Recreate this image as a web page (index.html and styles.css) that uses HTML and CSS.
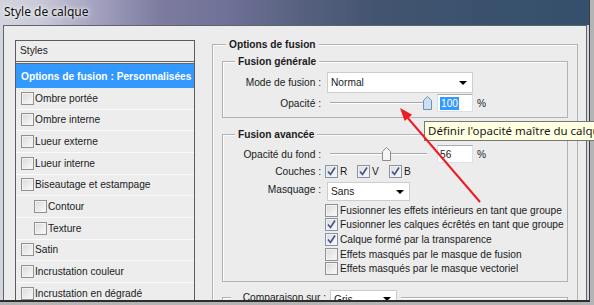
FILE: index.html
```html
<!DOCTYPE html>
<html lang="fr">

<head>
    <meta charset="UTF-8">
    <meta name="viewport" content="width=device-width, initial-scale=1.0">
    <title>Style de calque</title>
    <link rel="stylesheet" href="styles.css">
</head>

<body>

    <div class="window">
        <div class="titlebar">Style de calque</div>

        <div class="dialog">
            <!-- Liste des styles -->
            <div class="styles-list">
                <div class="list-head">Styles</div>
                <div class="list-item selected">Options de fusion : Personnalisées</div>
                <div class="list-item"><span class="cb"></span>Ombre portée</div>
                <div class="list-item"><span class="cb"></span>Ombre interne</div>
                <div class="list-item"><span class="cb"></span>Lueur externe</div>
                <div class="list-item"><span class="cb"></span>Lueur interne</div>
                <div class="list-item"><span class="cb"></span>Biseautage et estampage</div>
                <div class="list-item sub"><span class="cb"></span>Contour</div>
                <div class="list-item sub"><span class="cb"></span>Texture</div>
                <div class="list-item"><span class="cb"></span>Satin</div>
                <div class="list-item"><span class="cb"></span>Incrustation couleur</div>
                <div class="list-item"><span class="cb"></span>Incrustation en dégradé</div>
            </div>

            <!-- Options de fusion -->
            <div class="options">
                <div class="group outer">
                    <div class="group-title">Options de fusion</div>

                    <div class="group inner">
                        <div class="group-title">Fusion générale</div>
                        <div class="row mode">
                            <span class="label">Mode de fusion :</span>
                            <div class="select mode-select">Normal<i class="caret"></i></div>
                        </div>
                        <div class="row value-row">
                            <span class="label">Opacité :</span>
                            <div class="slider">
                                <div class="track"></div>
                                <svg class="thumb active" style="left: 92.5px" width="9" height="14" viewBox="0 0 9 14">
                                    <path d="M0.5 4.5 L4.5 0.5 L8.5 4.5 L8.5 13.5 L0.5 13.5 Z" />
                                </svg>
                            </div>
                            <div class="field"><span class="sel">100</span></div>
                            <span class="unit">%</span>
                        </div>
                    </div>

                    <div class="group inner advanced">
                        <div class="group-title">Fusion avancée</div>
                        <div class="row value-row">
                            <span class="label">Opacité du fond :</span>
                            <div class="slider">
                                <div class="track"></div>
                                <svg class="thumb" style="left: 51.6px" width="9" height="14" viewBox="0 0 9 14">
                                    <path d="M0.5 4.5 L4.5 0.5 L8.5 4.5 L8.5 13.5 L0.5 13.5 Z" />
                                </svg>
                            </div>
                            <div class="field">56</div>
                            <span class="unit">%</span>
                        </div>
                        <div class="row channels-row">
                            <span class="label">Couches :</span>
                            <div class="channels">
                                <span class="channel"><span class="cb checked"><svg width="11" height="11" viewBox="0 0 11 11"><path d="M2 5.5 L4.5 8.5 L9 1.5" /></svg></span>R</span>
                                <span class="channel"><span class="cb checked"><svg width="11" height="11" viewBox="0 0 11 11"><path d="M2 5.5 L4.5 8.5 L9 1.5" /></svg></span>V</span>
                                <span class="channel"><span class="cb checked"><svg width="11" height="11" viewBox="0 0 11 11"><path d="M2 5.5 L4.5 8.5 L9 1.5" /></svg></span>B</span>
                            </div>
                        </div>
                        <div class="row top-row masque">
                            <span class="label">Masquage :</span>
                            <div class="select masque-select">Sans<i class="caret"></i></div>
                        </div>
                        <div class="checklist">
                            <div class="check-row"><span class="cb"></span>Fusionner les effets intérieurs en tant que groupe</div>
                            <div class="check-row"><span class="cb checked"><svg width="11" height="11" viewBox="0 0 11 11"><path d="M2 5.5 L4.5 8.5 L9 1.5" /></svg></span>Fusionner les calques écrêtés en tant que groupe</div>
                            <div class="check-row"><span class="cb checked"><svg width="11" height="11" viewBox="0 0 11 11"><path d="M2 5.5 L4.5 8.5 L9 1.5" /></svg></span>Calque formé par la transparence</div>
                            <div class="check-row"><span class="cb"></span>Effets masqués par le masque de fusion</div>
                            <div class="check-row"><span class="cb"></span>Effets masqués par le masque vectoriel</div>
                        </div>
                    </div>

                    <div class="group inner compare">
                        <div class="legend">
                            <span class="label">Comparaison sur :</span>
                            <div class="select gris-select">Gris<i class="caret"></i></div>
                        </div>
                    </div>
                </div>
            </div>
        </div>

        <div class="tooltip">Définir l'opacité maître du calque</div>

        <svg class="arrow" width="594" height="305" viewBox="0 0 594 305">
            <line x1="480" y1="202" x2="407" y2="117" />
            <polygon points="400,108 412.2,114.7 404.6,121.1" />
        </svg>
    </div>

</body>

</html>
```

FILE: styles.css
```css
body {
    margin: 0;
    width: 594px;
    height: 305px;
    overflow: hidden;
    background: #b4b4b4;
    font-family: "Liberation Sans", Arial, sans-serif;
    font-size: 10.2px;
    color: #1b1b1b;
}

.window {
    position: relative;
    width: 589px;
    height: 300px;
    display: flex;
    flex-direction: column;
    border-right: 1px solid #3c3c3c;
    border-bottom: 2px solid #2c2c2c;
    background: #d3d6dd;
}

.titlebar {
    flex: none;
    height: 25px;
    padding-left: 4px;
    font-family: "Noto Sans", sans-serif;
    font-size: 12px;
    line-height: 24px;
    color: #101010;
    text-shadow: 0 0 6px #fff, 0 0 3px #fff;
    background: linear-gradient(90deg, #d3d5de 0, #c8c9d7 40px, #a19fbd 100px, #7d7b9f 160px, #6f7197 230px, #57617f 300px, #42546f 380px, #3b526e 470px, #35506c 589px);
}

.dialog {
    flex: 1;
    display: flex;
    align-items: flex-start;
    margin: 0 2px 0 3px;
    border: 1px solid #5d6470;
    border-bottom: 0;
    background: #ececec;
    overflow: hidden;
}

/* liste de gauche */
.styles-list {
    flex: none;
    width: 180px;
    margin: 14px 0 0 11px;
    box-sizing: border-box;
    border: 1px solid #5c5c5c;
    background: #ededed;
}

.list-head {
    height: 20px;
    line-height: 20px;
    padding-left: 4px;
    border-bottom: 3px double #666;
}

.list-item {
    height: 21.67px;
    box-sizing: border-box;
    display: flex;
    align-items: center;
    gap: 1px;
    padding-left: 5px;
    border-bottom: 1px solid #fbfbfb;
}

.list-item.selected {
    height: 24px;
    border-bottom: 0;
    background: #3399ff;
    color: #fff;
    font-weight: bold;
}

.list-item.sub {
    padding-left: 18px;
}

/* cases a cocher */
.cb {
    flex: none;
    width: 13px;
    height: 13px;
    box-sizing: border-box;
    display: flex;
    align-items: center;
    justify-content: center;
    border: 1px solid #929292;
    background: linear-gradient(135deg, #d9d9d9, #fbfbfb);
    box-shadow: inset 0 0 0 1px #f2f2f2;
}

.cb.checked {
    border-color: #8a93a6;
}

.cb svg path {
    fill: none;
    stroke: #40528a;
    stroke-width: 1.6;
}

/* panneau de droite */
.options {
    flex: none;
    margin: 18px 0 0 17px;
}

.group {
    border: 1px solid #b2b2b2;
    box-shadow: inset 1px 1px 0 #fcfcfc;
}

.outer {
    width: 366px;
    height: 300px;
    box-sizing: border-box;
    padding: 0 9px;
}

.group-title {
    width: fit-content;
    height: 13px;
    margin: -7px 0 0 12px;
    padding: 0 3px;
    line-height: 13px;
    background: #ececec;
    font-weight: bold;
}

.outer > .group-title {
    margin-left: 4px;
}

.inner {
    margin-top: 10px;
    padding-bottom: 5px;
}

.advanced {
    margin-top: 16px;
}

.compare {
    margin-top: 15px;
    height: 40px;
}

.row {
    display: flex;
    align-items: center;
}

.row.top-row {
    align-items: flex-start;
}

.label {
    flex: none;
    width: 98px;
    line-height: 13px;
    text-align: right;
}

.top-row .label {
    padding-top: 1px;
}

.mode {
    height: 21px;
    margin-top: 4px;
}

.value-row {
    height: 18px;
    margin-top: 1px;
}

.advanced .value-row {
    margin-top: 4px;
}

.channels-row {
    height: 13px;
    margin-top: 2px;
}

.masque {
    height: 19px;
    margin-top: 4px;
}

.select {
    flex: none;
    box-sizing: border-box;
    display: flex;
    align-items: center;
    justify-content: space-between;
    margin-left: 6px;
    padding: 0 5px 0 3px;
    border: 1px solid #cdcdcd;
    background: #fff;
}

.mode-select {
    width: 146px;
    height: 21px;
}

.masque-select {
    width: 83px;
    height: 19px;
}

.caret {
    border-left: 4px solid transparent;
    border-right: 4px solid transparent;
    border-top: 4px solid #000;
}

.slider {
    position: relative;
    display: flex;
    align-items: center;
    width: 100px;
    height: 14px;
    margin-left: 9px;
}

.track {
    flex: 1;
    margin-right: 3px;
    border-top: 1px solid #a8a8a8;
    border-bottom: 1px solid #fff;
}

.thumb {
    position: absolute;
    top: 0;
}

.thumb path {
    fill: #f6f6f6;
    stroke: #8c8c8c;
}

.thumb.active path {
    fill: #c9e0f5;
    stroke: #6f8fb3;
}

.field {
    flex: none;
    width: 36px;
    height: 18px;
    box-sizing: border-box;
    display: flex;
    align-items: center;
    margin-left: 7px;
    padding-left: 2px;
    border: 1px solid #dbdfe6;
    border-top-color: #abadb3;
    background: #fff;
}

.sel {
    padding: 0 1px;
    line-height: 13px;
    background: #3399ff;
    color: #fff;
}

.unit {
    margin-left: 4px;
}

.channels {
    display: flex;
    margin-left: 4px;
}

.channel {
    width: 32px;
    display: flex;
    align-items: center;
    gap: 2px;
}

.checklist {
    margin: 2px 0 0 102px;
}

.check-row {
    height: 14.6px;
    display: flex;
    align-items: center;
    gap: 2px;
    white-space: nowrap;
}

.legend {
    width: fit-content;
    height: 19px;
    display: flex;
    align-items: flex-start;
    margin: -8px 0 0 8px;
    padding-right: 4px;
    background: #ececec;
}

.legend .label {
    width: 95px;
    padding-top: 1px;
}

.gris-select {
    width: 67px;
    height: 19px;
    margin-left: 4px;
}

/* infobulle et fleche */
.tooltip {
    position: absolute;
    left: 424px;
    top: 121px;
    height: 20px;
    box-sizing: border-box;
    padding: 0 3px;
    border: 1px solid #767676;
    background: #ffffe1;
    font-family: "Noto Sans", sans-serif;
    font-size: 11.5px;
    line-height: 18px;
    color: #1a1a1a;
    white-space: nowrap;
}

.arrow {
    position: absolute;
    left: 0;
    top: 0;
    pointer-events: none;
}

.arrow line {
    stroke: #ea1d25;
    stroke-width: 2;
}

.arrow polygon {
    fill: #ea1d25;
}
```
